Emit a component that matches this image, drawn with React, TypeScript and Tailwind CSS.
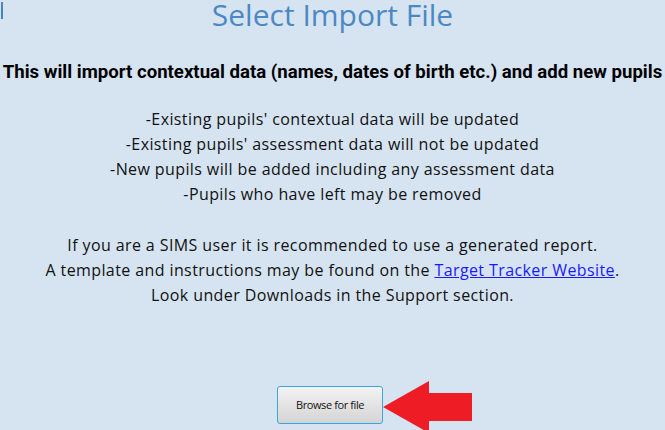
export default function App() {
  return (
    <div className="relative w-[665px] h-[430px] overflow-hidden bg-[#d6e4f2] text-[#111]">
      <div className="absolute left-[1px] top-[2px] w-[2px] h-[17px] bg-[#4a84c2]" />

      <div className="flex flex-col items-center text-center">
        <h1 className="font-['Open_Sans',sans-serif] text-[30px] leading-[29px] text-[#4c88c4]">
          Select Import File
        </h1>

        <p className="mt-[32px] font-['Roboto',sans-serif] font-bold text-[18.6px] leading-[22px] text-black whitespace-nowrap">
          This will import contextual data (names, dates of birth etc.) and add new pupils
        </p>

        <div className="mt-[24px] font-['Open_Sans',sans-serif] text-[16px] leading-[25px] tracking-[0.4px]">
          <p>-Existing pupils' contextual data will be updated</p>
          <p>-Existing pupils' assessment data will not be updated</p>
          <p>-New pupils will be added including any assessment data</p>
          <p>-Pupils who have left may be removed</p>
        </div>

        <div className="mt-[26px] font-['Open_Sans',sans-serif] text-[16px] leading-[25px] tracking-[0.4px]">
          <p>If you are a SIMS user it is recommended to use a generated report.</p>
          <p>
            A template and instructions may be found on the{' '}
            <a href="#" className="text-[#1a1aff] underline">
              Target Tracker Website
            </a>
            .
          </p>
          <p>Look under Downloads in the Support section.</p>
        </div>

        <div className="relative mt-[78px] mr-[5px]">
          <button
            type="button"
            className="w-[106px] h-[38px] rounded-[3px] border border-[#3aa6dd] bg-gradient-to-b from-[#f3f3f3] to-[#d4d4d4] font-['Open_Sans',sans-serif] text-[11px] tracking-[-0.4px] text-[#111]"
          >
            Browse for file
          </button>
          <svg
            className="absolute left-[106px] top-[-5px]"
            width="90"
            height="52"
            viewBox="0 0 90 52"
          >
            <polygon points="0,26 46,0 46,12 89,12 89,40 46,40 46,52" fill="#ee1c25" />
          </svg>
        </div>
      </div>
    </div>
  );
}
